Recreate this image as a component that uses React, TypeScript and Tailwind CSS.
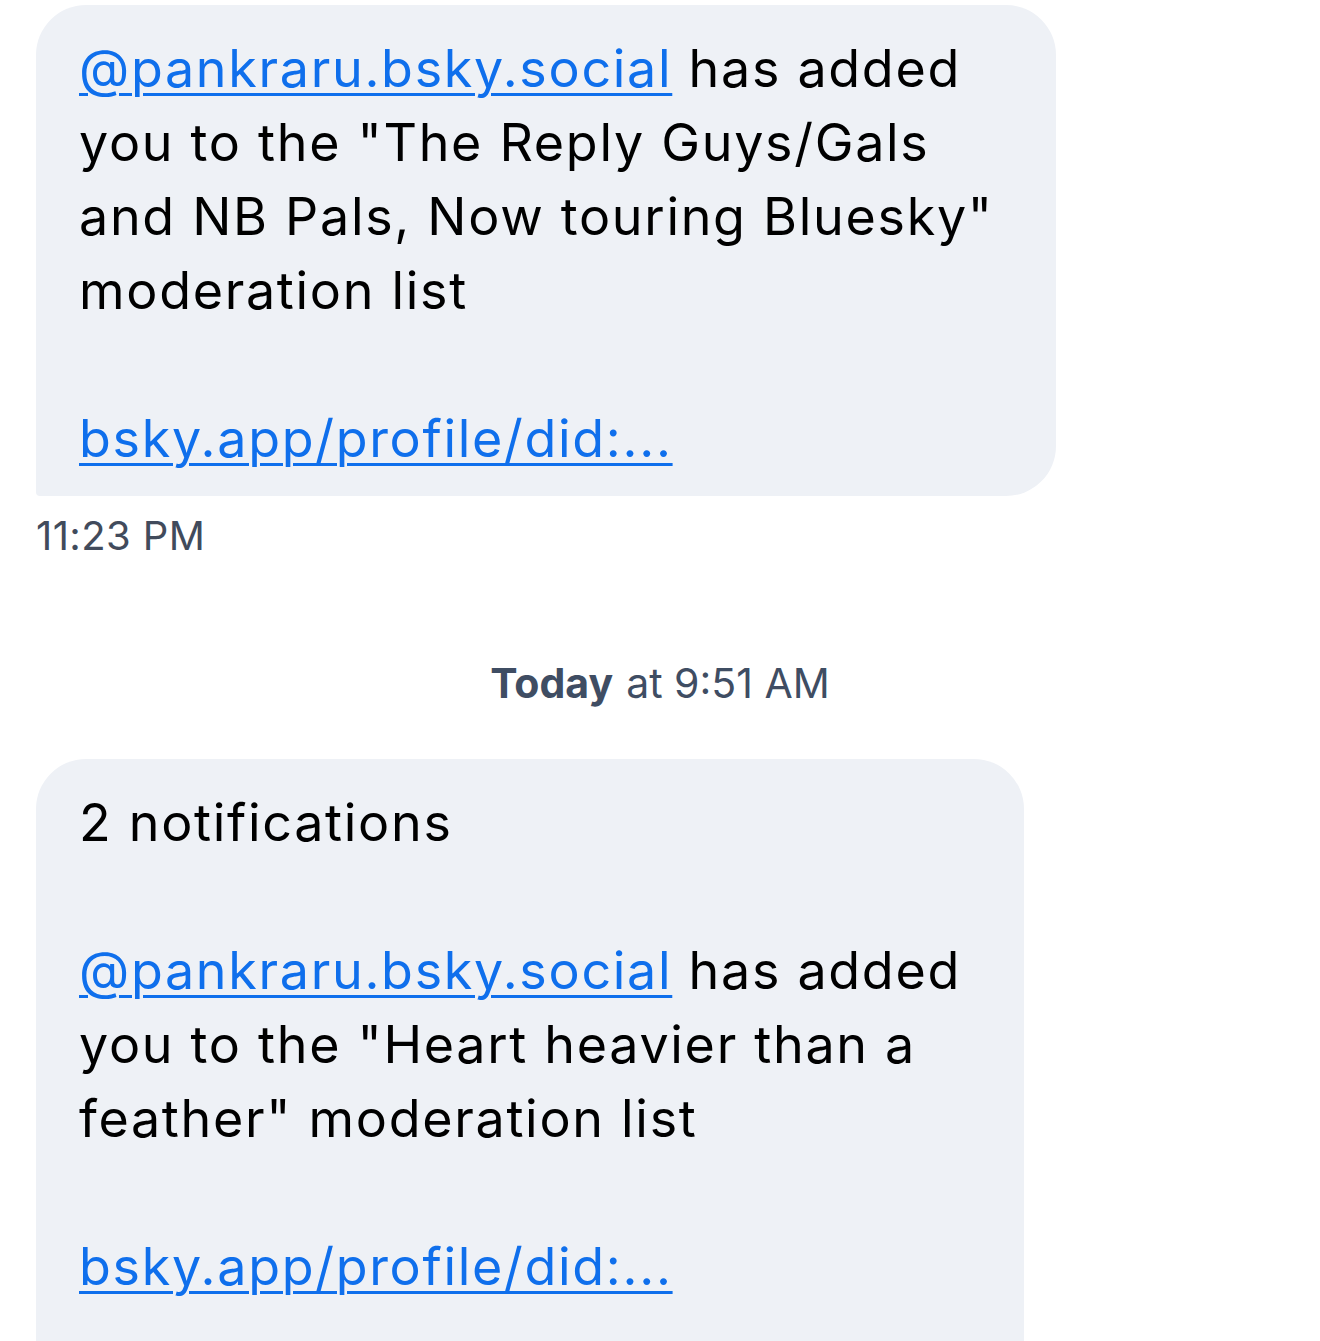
import React from 'react';

const LINK = 'text-[#0f6fec] underline decoration-[3px] underline-offset-[6px]';

type Bubble = {
  width: string;
  corner: string;
  children: React.ReactNode;
};

const MessageBubble: React.FC<Bubble> = ({ width, corner, children }) => (
  <div
    className={`${width} ${corner} bg-[#eef1f6] pl-[43px] pr-[30px] pt-[27px] pb-[20px] text-[52px] leading-[74px] text-black tracking-[1.7px] whitespace-nowrap`}
    style={{ fontFamily: 'Inter, "Noto Sans", sans-serif' }}
  >
    {children}
  </div>
);

export default function App() {
  return (
    <div className="w-[1320px] h-[1341px] overflow-hidden bg-white" style={{ fontFamily: 'Inter, sans-serif' }}>
      <div className="flex flex-col pl-[36px] pt-[5px]">
        {/* first message */}
        <MessageBubble width="w-[1020px]" corner="rounded-tl-[50px] rounded-tr-[50px] rounded-br-[50px] rounded-bl-[4px]">
          <span className={LINK}>@pankraru.bsky.social</span> has added
          <br />
          you to the "The Reply Guys/Gals
          <br />
          and NB Pals, Now touring Bluesky"
          <br />
          moderation list
          <br />
          <br />
          <span className={LINK}>bsky.app/profile/did:...</span>
        </MessageBubble>
        <div className="mt-[16px] text-[40px] leading-[48px] text-[#414b5c] tracking-[0.4px]">11:23 PM</div>

        {/* day separator */}
        <div className="mt-[98px] pr-[36px] flex justify-center text-[41px] leading-[50px] text-[#3f4d63]">
          <span className="font-bold">Today</span>
          <span className="ml-[13px]">at 9:51 AM</span>
        </div>

        {/* second message */}
        <div className="mt-[51px]">
          <MessageBubble width="w-[988px]" corner="rounded-tl-[50px] rounded-tr-[50px]">
            2 notifications
            <br />
            <br />
            <span className={LINK}>@pankraru.bsky.social</span> has added
            <br />
            you to the "Heart heavier than a
            <br />
            feather" moderation list
            <br />
            <br />
            <span className={LINK}>bsky.app/profile/did:...</span>
            <div className="h-[200px]" />
          </MessageBubble>
        </div>
      </div>
    </div>
  );
}
